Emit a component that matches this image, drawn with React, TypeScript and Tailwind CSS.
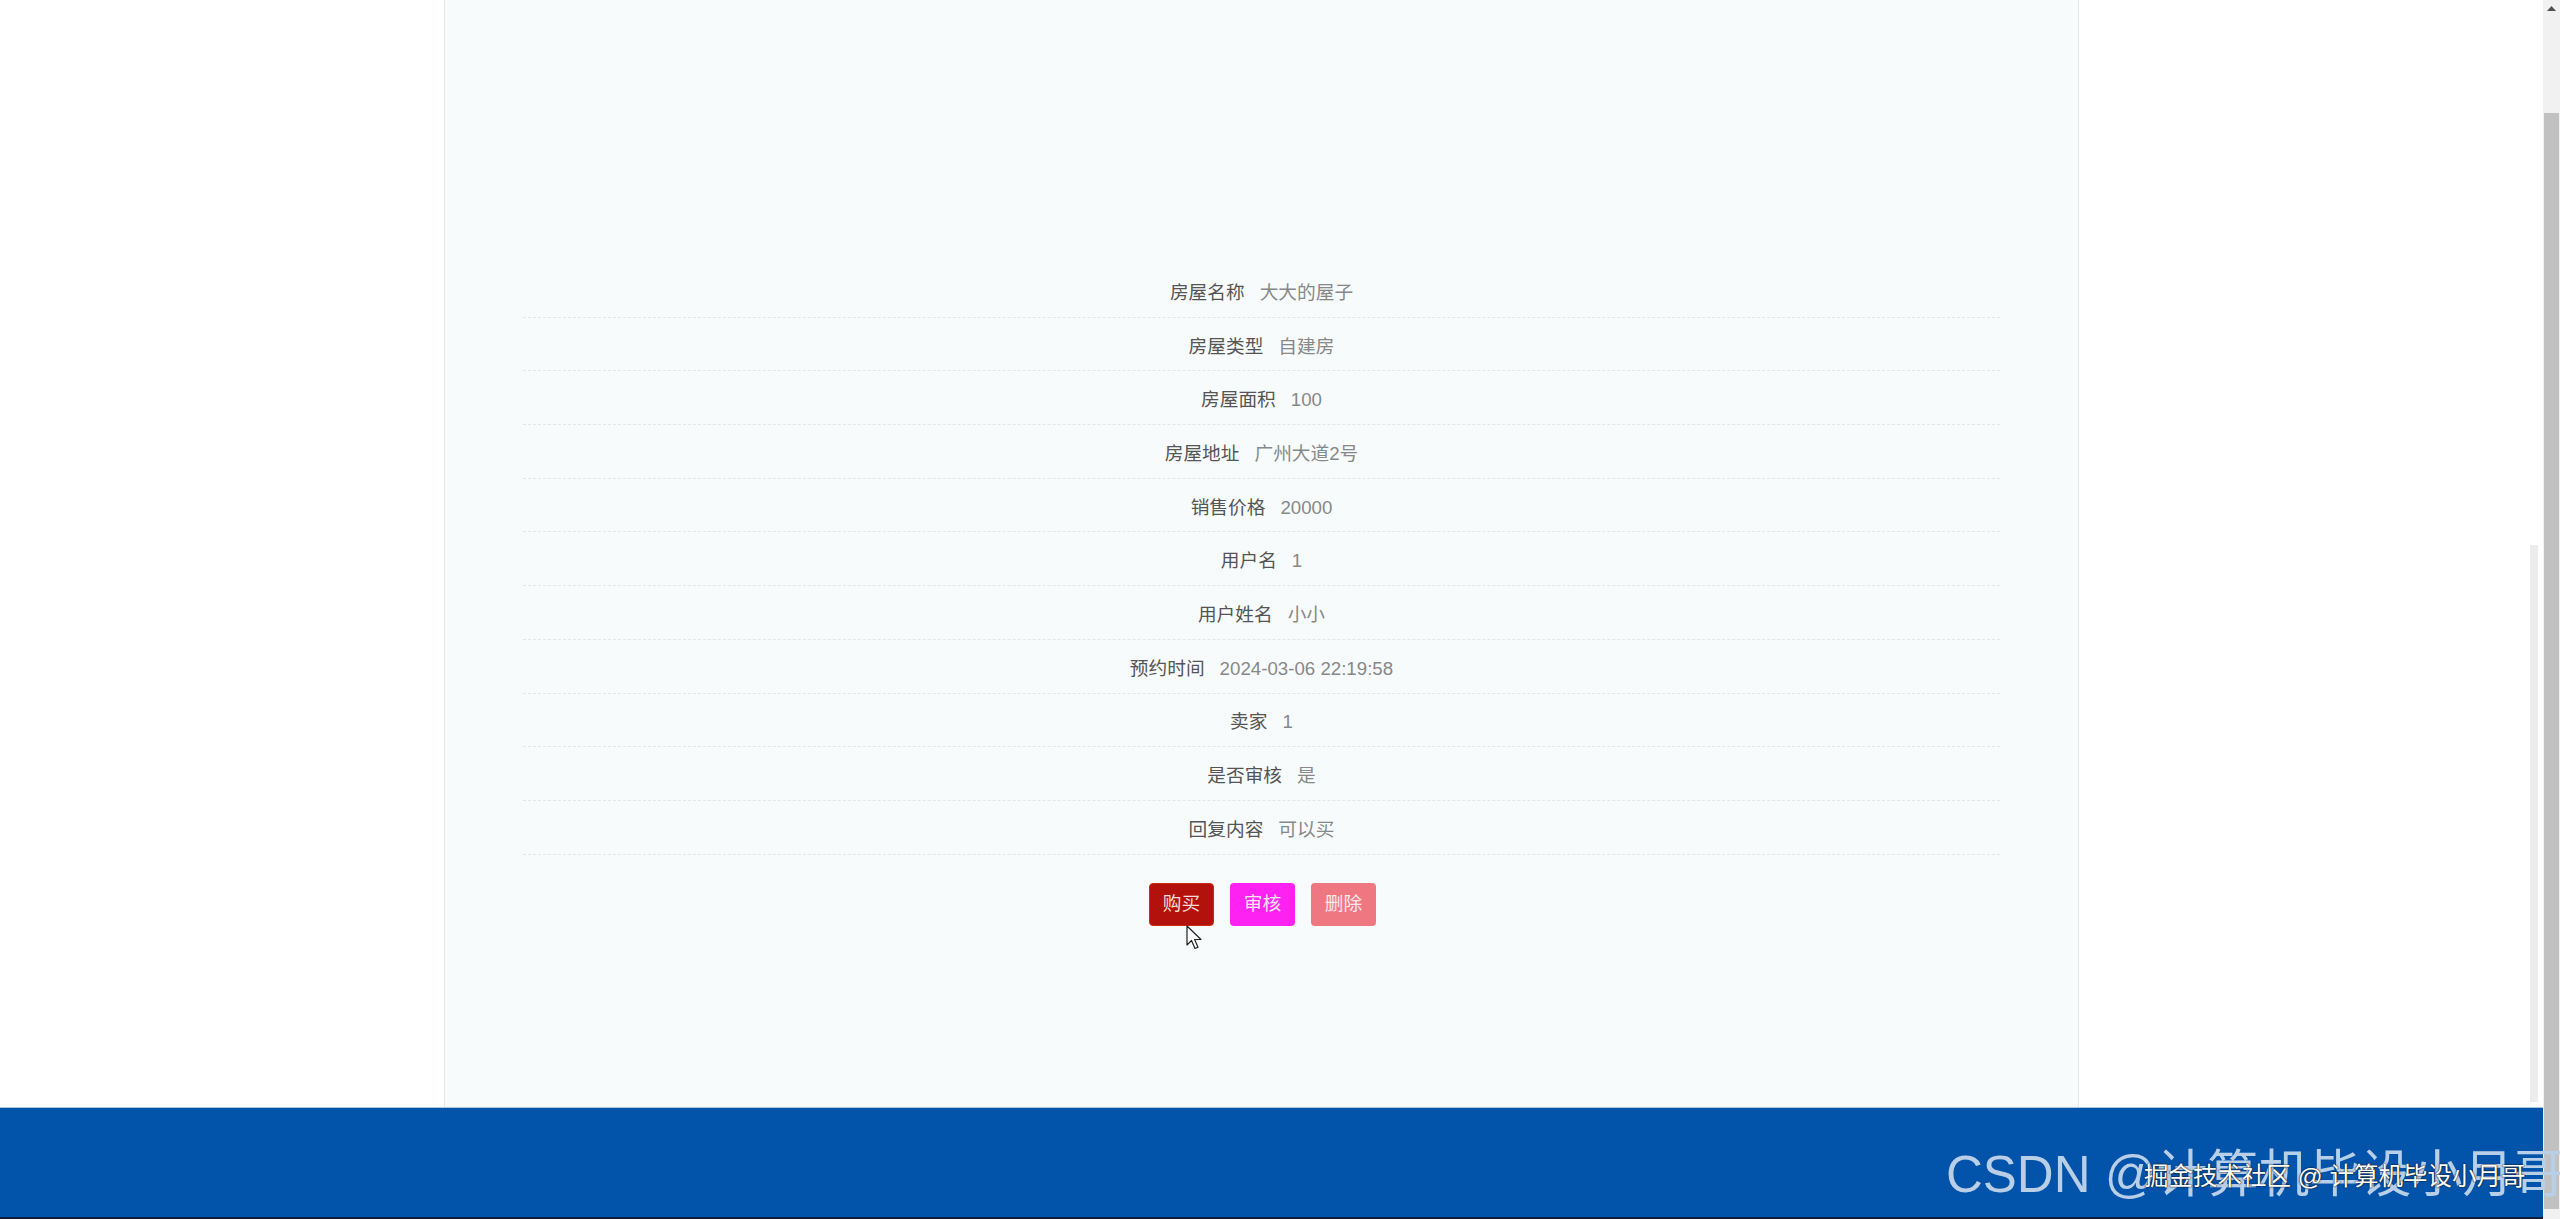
import React from "react";

const rows: [string, string][] = [
  ["房屋名称", "大大的屋子"],
  ["房屋类型", "自建房"],
  ["房屋面积", "100"],
  ["房屋地址", "广州大道2号"],
  ["销售价格", "20000"],
  ["用户名", "1"],
  ["用户姓名", "小小"],
  ["预约时间", "2024-03-06 22:19:58"],
  ["卖家", "1"],
  ["是否审核", "是"],
  ["回复内容", "可以买"],
];

const font = "font-['Liberation_Sans','Noto_Sans_CJK_SC',sans-serif]";

export default function App() {
  return (
    <div className={`relative flex h-[1219px] w-[2560px] overflow-hidden bg-white ${font}`}>
      <div className="flex w-[2543px] flex-col">
        <div className="flex h-[1107px] pl-[444px]">
          <div className="flex h-full w-[1635px] flex-col border-x border-[#e6e9ea] bg-[#f7fbfc] px-[78px] pt-[264px]">
            {rows.map(([k, v]) => (
              <div
                key={k}
                className="flex h-[53.7px] items-center justify-center gap-[15px] border-b border-dashed border-[#e3e6e8] pt-[6px] text-[18.7px] leading-none"
              >
                <span className="text-[#555555]">{k}</span>
                <span className="text-[#888888]">{v}</span>
              </div>
            ))}
            <div className="mt-[28px] flex justify-center gap-[16px] pl-[2px]">
              <button className="h-[43px] w-[65px] rounded-[4px] border border-[#cc2a12] bg-[#b3110b] text-[18.7px] text-[#f8dcd4]">
                购买
              </button>
              <button className="h-[43px] w-[65px] rounded-[4px] bg-[#fd22f2] text-[18.7px] text-[#fde6fb]">
                审核
              </button>
              <button className="h-[43px] w-[65px] rounded-[4px] bg-[#ef7781] text-[18.7px] text-[#fde9ea]">
                删除
              </button>
            </div>
          </div>
        </div>
        <div className="relative h-[112px] border-t border-[#a9c6e2] border-b-2 border-b-[#0c1e44] bg-[#0253aa]">
          <div className="absolute left-[1946px] top-[41px] whitespace-nowrap text-[51px] leading-none text-[#b9cfe8]">
            CSDN @计算机毕设小月哥
          </div>
          <div className="absolute left-[2144px] top-[57px] whitespace-nowrap text-[24.5px] leading-none text-white [text-shadow:0_0_2px_#1a1a1a,0_0_1px_#000]">
            掘金技术社区 @ 计算机毕设小月哥
          </div>
        </div>
      </div>
      <div className="flex w-[17px] flex-col bg-[#f1f1f1]">
        <div className="flex h-[113px] justify-center pt-[6px]">
          <svg width="9" height="5" viewBox="0 0 9 5">
            <path d="M0 5 L4.5 0 L9 5 Z" fill="#505050" />
          </svg>
        </div>
        <div className="mx-[1px] flex-1 bg-[#c1c1c1]" />
        <div className="h-[10px]" />
      </div>
      <div className="absolute left-[2530px] top-[545px] h-[557px] w-[8px] bg-[#ececec]" />
      <svg className="absolute left-[1186px] top-[925px]" width="17" height="26" viewBox="0 0 17 26">
        <path
          d="M1 1 L1 20 L5.5 15.5 L9 23.5 L12 22.2 L8.6 14.5 L15 14.5 Z"
          fill="#ffffff"
          stroke="#222222"
          strokeWidth="1.2"
          strokeLinejoin="round"
        />
      </svg>
    </div>
  );
}
